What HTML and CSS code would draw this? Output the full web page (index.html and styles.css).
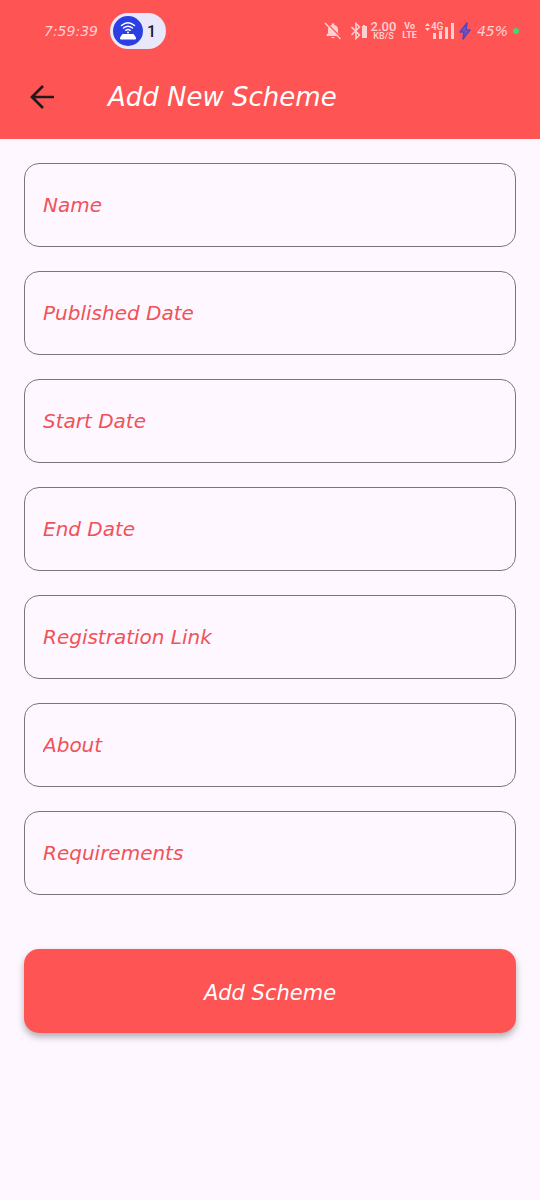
FILE: index.html
```html
<!DOCTYPE html>
<html lang="en">
<head>
<meta charset="utf-8">
<meta name="viewport" content="width=device-width, initial-scale=1">
<title>Add New Scheme</title>
<link rel="stylesheet" href="styles.css">
</head>
<body>
<header class="header">
  <div class="status">
    <time class="clock">7:59:39</time>
    <div class="hotspot">
      <svg class="hotspot-icon" viewBox="0 0 30 30" aria-hidden="true">
        <circle cx="15" cy="15" r="15" fill="#2c3fe0"/>
        <g fill="none" stroke="#fff" stroke-width="1.5" stroke-linecap="round">
          <path d="M8.500 9.500Q15 4 21.500 9.500M10.500 12Q15 8.500 19.500 12M12.800 14.300Q15 12.800 17.200 14.300"/>
        </g>
        <circle cx="15" cy="16.500" r="1" fill="#fff"/>
        <path d="M9.500 18h11l2.500 3.500v1q0 1-1 1H8q-1 0-1-1v-1z" fill="#fff"/>
      </svg>
      <span>1</span>
    </div>
    <div class="indicators">
      <svg width="18" height="18" viewBox="0 0 18 18" aria-hidden="true">
        <path d="M2.500 14v-1L4 11V7.500C4 5 5.500 3.500 7.800 3V1.500h2.400V3c2.300.5 3.800 2 3.800 4.500V11l1.500 2v1zM7 15h4q-2 2.500-4 0z" fill="#ffd0d2"/>
        <path d="M2.500 1l15 15" stroke="#ff5454" stroke-width="1.500"/>
        <path d="M1 1l15.500 16" stroke="#ffd0d2" stroke-width="1.300"/>
      </svg>
      <svg class="bluetooth" width="18" height="18" viewBox="0 0 18 18" aria-hidden="true">
        <path d="M1.500 5l8 8L6 16.500v-15L9.500 5l-8 8" fill="none" stroke="#ffd0d2" stroke-width="1.500"/>
        <path d="M13 3h2v1h2v12h-5V4h1z" fill="#ffd0d2"/>
      </svg>
      <span class="stack speed"><span>2.00</span><small>KB/S</small></span>
      <span class="stack volte"><span>Vo</span><span>LTE</span></span>
      <span class="signal">
        <svg width="30" height="18" viewBox="0 0 30 18" aria-hidden="true">
          <path d="M0 4l2.500-3L5 4zM0 6l2.500 3L5 6z" fill="#ffd0d2"/>
          <path d="M8 11h3v6H8zM14 9h3v8h-3zM20 5h3v12h-3zM26 1h3v16h-3z" fill="#ffd0d2"/>
        </svg>
        <span class="network">4G</span>
      </span>
      <svg class="bolt" width="12" height="18" viewBox="0 0 12 18" aria-hidden="true">
        <path d="M8 1L1 10h4l-1 7 7-9H7z" fill="#8050a8" stroke="#5145c8" stroke-width="1.500" stroke-linejoin="round"/>
      </svg>
      <span class="battery">45%</span>
      <span class="dot"></span>
    </div>
  </div>
  <div class="toolbar">
    <button class="back" type="button" aria-label="Back">
      <svg width="26" height="26" viewBox="0 0 26 26" aria-hidden="true">
        <path d="M25 13H3M14 2L3 13l11 11" fill="none" stroke="#211a1d" stroke-width="2.700"/>
      </svg>
    </button>
    <h1 class="title">Add New Scheme</h1>
  </div>
</header>
<main>
  <form class="form">
    <input class="field" type="text" aria-label="Name" placeholder="Name">
    <input class="field" type="text" aria-label="Published Date" placeholder="Published Date">
    <input class="field" type="text" aria-label="Start Date" placeholder="Start Date">
    <input class="field" type="text" aria-label="End Date" placeholder="End Date">
    <input class="field" type="text" aria-label="Registration Link" placeholder="Registration Link">
    <input class="field" type="text" aria-label="About" placeholder="About">
    <input class="field" type="text" aria-label="Requirements" placeholder="Requirements">
    <button class="submit" type="button">Add Scheme</button>
  </form>
</main>
</body>
</html>
```
FILE: styles.css
```css
* {
  box-sizing: border-box;
}

body {
  margin: 0;
  min-height: 100vh;
  background: #fef7ff;
  font-family: "DejaVu Sans", sans-serif;
}

.header {
  background: #ff5454;
  color: #fff;
}

.status {
  display: flex;
  align-items: center;
  height: 62px;
  padding: 0 21px 0 44px;
  color: #ffd0d2;
}

.clock {
  font-size: 14px;
  font-style: italic;
}

.hotspot {
  display: flex;
  align-items: center;
  gap: 4px;
  width: 56px;
  height: 36px;
  margin-left: 12px;
  padding: 3px;
  border-radius: 18px;
  background: #e8e8fa;
  color: #1b1b2a;
  font: 500 16px Roboto, sans-serif;
}

.hotspot-icon {
  width: 30px;
  height: 30px;
}

.indicators {
  display: flex;
  align-items: center;
  gap: 8px;
  margin-left: auto;
}

.stack {
  display: flex;
  flex-direction: column;
  align-items: center;
}

.bluetooth {
  margin-right: -5px;
}

.speed {
  font: 500 13px/11px Roboto, sans-serif;
}

.speed small {
  font-size: 9px;
  line-height: 9px;
}

.volte {
  margin-left: -2px;
  font: 700 9px/9px Roboto, sans-serif;
}

.signal {
  position: relative;
  display: flex;
}

.network {
  position: absolute;
  top: 0;
  left: 6px;
  background: #ff5454;
  font: 500 10px/9px Roboto, sans-serif;
}

.bolt {
  margin-left: -4px;
}

.battery {
  margin-left: -2px;
  font-size: 14px;
  font-style: italic;
}

.dot {
  width: 6px;
  height: 6px;
  margin-left: -3px;
  border-radius: 50%;
  background: #43d67b;
}

.toolbar {
  display: flex;
  align-items: center;
  gap: 53px;
  height: 77px;
  padding: 0 29px 7px;
}

.back {
  display: flex;
  padding: 0;
  border: 0;
  background: none;
}

.title {
  margin: 0;
  font-size: 26px;
  font-style: italic;
  font-weight: 400;
  line-height: 32px;
}

.form {
  display: flex;
  flex-direction: column;
  gap: 24px;
  padding: 24px;
}

.field {
  width: 100%;
  height: 84px;
  padding: 0 18px;
  border: 1px solid #79747e;
  border-radius: 15px;
  background: transparent;
  color: #f05257;
  font: italic 20px "DejaVu Sans", sans-serif;
}

.field::placeholder {
  color: #f05257;
  opacity: 1;
}

.submit {
  height: 84px;
  margin-top: 30px;
  padding-top: 4px;
  border: 0;
  border-radius: 15px;
  background: #ff5454;
  box-shadow: 0 4px 7px rgba(0, 0, 0, 0.3);
  color: #fff;
  font: italic 21px "DejaVu Sans", sans-serif;
}
```
